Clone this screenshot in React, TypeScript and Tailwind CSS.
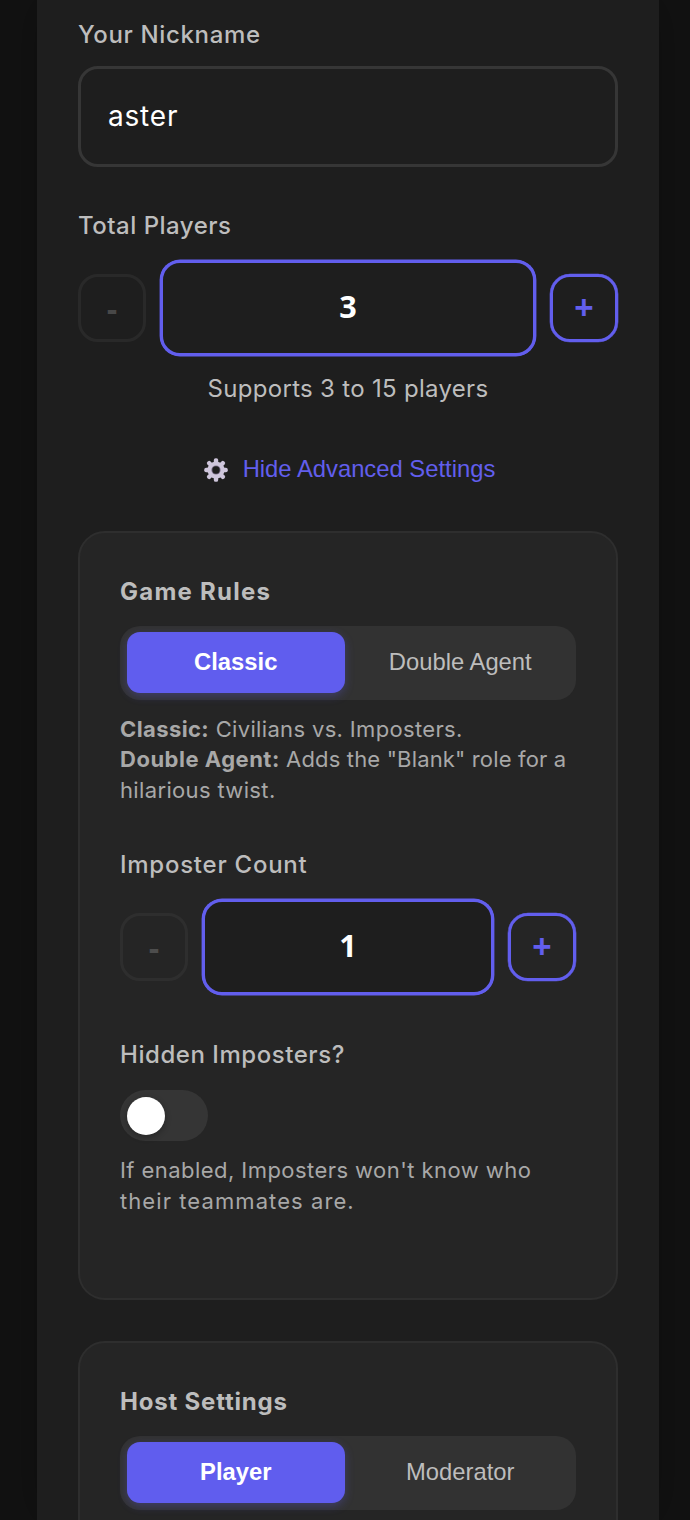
import { useState } from "react";
import clsx from "clsx";

function GearIcon() {
  return (
    <svg className="mt-0.5" width="24" height="24" viewBox="-12 -12 24 24">
      <g fill="#cfc6dc">
        {[0, 45, 90, 135].map((angle) => (
          <rect key={angle} x="-2.2" y="-11.8" width="4.4" height="23.6" rx="1.9" transform={`rotate(${angle})`} />
        ))}
        <circle r="8.6" />
      </g>
      <circle r="4.6" fill="#7d708b" />
      <circle r="3.7" fill="#1e1e1e" />
    </svg>
  );
}

type StepperProps = {
  value: number;
  min: number;
  max: number;
  onChange: (value: number) => void;
};

function Stepper({ value, min, max, onChange }: StepperProps) {
  const button =
    "flex h-[68px] w-[68px] shrink-0 items-center justify-center rounded-[20px] border-[3px] border-[#625eed] font-['Liberation_Sans',sans-serif] text-[33px] leading-none font-bold text-[#625eed] shadow-[0_0_0_0.3px_#625eed] disabled:border-[#444] disabled:text-[#aaa] disabled:opacity-30 disabled:shadow-none";

  return (
    <div className="flex items-center gap-3.5">
      <button className={clsx(button, "pt-0.5")} disabled={value <= min} onClick={() => onChange(value - 1)}>
        -
      </button>
      <div className="flex h-24 flex-1 items-center justify-center rounded-[20px] border-[3px] border-[#625eed] bg-[#1e1e1e] pb-[5px] font-['Open_Sans',sans-serif] text-[30.6px] font-bold text-white shadow-[0_0_0_0.4px_#625eed]">
        {value}
      </div>
      <button className={clsx(button, "pb-0.5")} disabled={value >= max} onClick={() => onChange(value + 1)}>
        +
      </button>
    </div>
  );
}

type SegmentedProps = {
  options: string[];
  value: string;
  onChange: (value: string) => void;
};

function Segmented({ options, value, onChange }: SegmentedProps) {
  return (
    <div className="flex h-[74px] rounded-[20px] bg-[#323232] px-[7px] pt-1.5 pb-[7px] font-['Liberation_Sans',sans-serif] text-[23.8px]">
      {options.map((option) => (
        <button
          key={option}
          onClick={() => onChange(option)}
          className={clsx(
            "mr-[7px] flex-1 rounded-[13px] pb-px last:mr-0",
            option === value
              ? "bg-[#605dee] font-bold text-white shadow-[0_3px_10px_rgba(96,93,238,0.3)]"
              : "text-[#bdbdbd]"
          )}
        >
          {option}
        </button>
      ))}
    </div>
  );
}

export default function App() {
  const [nickname, setNickname] = useState("aster");
  const [players, setPlayers] = useState(3);
  const [imposters, setImposters] = useState(1);
  const [rules, setRules] = useState("Classic");
  const [host, setHost] = useState("Player");
  const [hidden, setHidden] = useState(false);
  const [showAdvanced, setShowAdvanced] = useState(true);

  return (
    <div className="h-[1520px] overflow-hidden bg-[#121212] font-['Inter',sans-serif] text-[24px] leading-9 font-medium text-[#bdbdbd]">
      <main className="mr-[31px] ml-[37px] h-full bg-[#1e1e1e] px-[41px] pt-[17px] shadow-[0_0_40px_rgba(0,0,0,0.25)]">
        <label className="block tracking-[0.65px]">Your Nickname</label>
        <input
          className="mt-[13px] block h-[101px] w-full rounded-[20px] border-[3px] border-[#363636] bg-[#1e1e1e] px-[27px] pb-0.5 text-[28px] font-normal tracking-[0.8px] text-white outline-none"
          value={nickname}
          onChange={(e) => setNickname(e.target.value)}
        />

        <div className="mt-[41px] mb-4 tracking-[0.5px]">Total Players</div>
        <Stepper value={players} min={3} max={15} onChange={setPlayers} />
        <p className="mt-[15px] text-center font-normal tracking-[0.3px]">Supports 3 to 15 players</p>

        <button
          onClick={() => setShowAdvanced(!showAdvanced)}
          className="mt-11 flex w-full items-center justify-center gap-[15px] pl-[3px] font-['Liberation_Sans',sans-serif] text-[23.8px] font-normal text-[#625eed]"
        >
          <GearIcon />
          {showAdvanced ? "Hide" : "Show"} Advanced Settings
        </button>

        {showAdvanced && (
          <>
            {/* Game rules */}
            <section className="mt-11 h-[769px] rounded-[27px] border-2 border-[#2e2e2e] bg-[#252525] px-10 pt-[41px]">
              <h2 className="font-bold tracking-[1.25px]">Game Rules</h2>
              <div className="mt-4">
                <Segmented options={["Classic", "Double Agent"]} value={rules} onChange={setRules} />
              </div>
              <div className="mt-[14px] text-[22px] leading-[30.4px] font-normal whitespace-nowrap text-[#a8a8a8]">
                <p className="tracking-[0.34px]">
                  <b className="tracking-[0.4px]">Classic:</b> Civilians vs. Imposters.
                </p>
                <p className="tracking-[0.16px]">
                  <b className="tracking-[0.5px]">Double Agent:</b> Adds the "Blank" role for a
                </p>
                <p className="tracking-[0.35px]">hilarious twist.</p>
              </div>

              <div className="mt-[42px] mb-4 tracking-[0.75px]">Imposter Count</div>
              <Stepper value={imposters} min={1} max={2} onChange={setImposters} />

              <div className="mt-[42px] mb-[17px] tracking-[0.55px]">Hidden Imposters?</div>
              <button
                role="switch"
                aria-checked={hidden}
                onClick={() => setHidden(!hidden)}
                className={clsx(
                  "flex h-[51px] w-[88px] items-center rounded-full px-[7px]",
                  hidden ? "justify-end bg-[#605dee]" : "bg-[#353535]"
                )}
              >
                <span className="h-[38px] w-[38px] rounded-full bg-white shadow-[0_2px_6px_rgba(0,0,0,0.3)]" />
              </button>
              <div className="mt-[14px] text-[22px] leading-[30.6px] font-normal whitespace-nowrap text-[#a8a8a8]">
                <p className="tracking-[0.44px]">If enabled, Imposters won't know who</p>
                <p className="tracking-[1.08px]">their teammates are.</p>
              </div>
            </section>

            {/* Host settings */}
            <section className="mt-[41px] h-[300px] rounded-[27px] border-2 border-[#2e2e2e] bg-[#252525] px-10 pt-[41px]">
              <h2 className="font-bold tracking-[0.8px]">Host Settings</h2>
              <div className="mt-4">
                <Segmented options={["Player", "Moderator"]} value={host} onChange={setHost} />
              </div>
            </section>
          </>
        )}
      </main>
    </div>
  );
}
